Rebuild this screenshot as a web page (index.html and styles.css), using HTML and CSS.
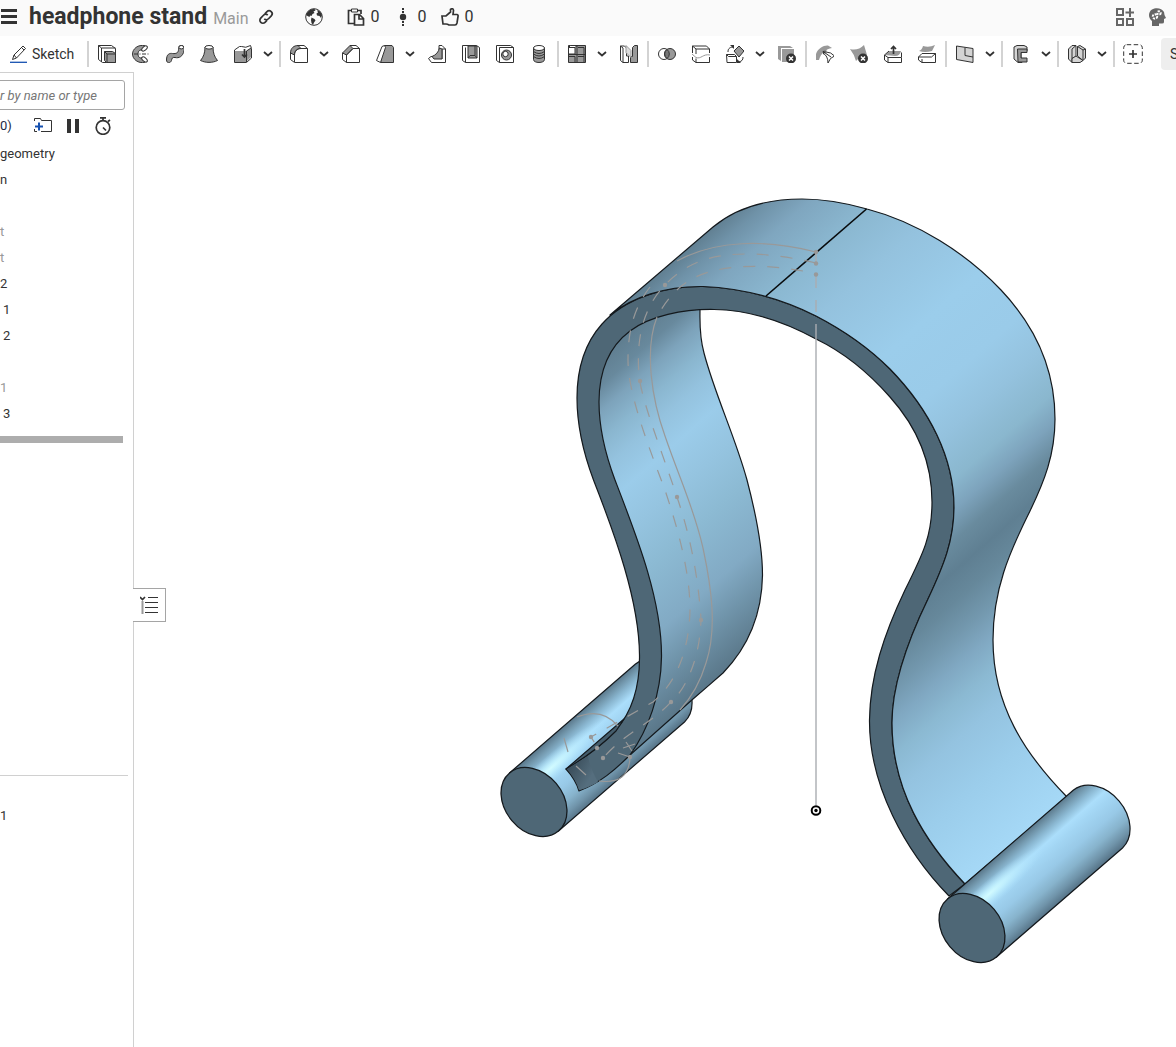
FILE: index.html
```html
<!DOCTYPE html>
<html lang="en">
<head>
<meta charset="utf-8">
<title>headphone stand</title>
<link rel="stylesheet" href="styles.css">
</head>
<body>
<header class="header">
  <button class="plain" aria-label="Menu"><svg class="icon" viewBox="0 0 18 18"><path class="solid" d="M1 1h16v3H1zM1 7h16v3H1zM1 13h16v3H1z"/></svg></button>
  <h1 class="title">headphone stand</h1>
  <span class="workspace">Main</span>
  <button class="plain link" aria-label="Copy link"><svg class="icon" viewBox="0 0 18 18"><g class="thick" transform="rotate(-46 9 9)"><path d="M7.500 12H4.500a3 3 0 010-6h4a3 3 0 013 3"/><path d="M10.500 6h3a3 3 0 010 6h-4a3 3 0 01-3-3"/></g></svg></button>
  <button class="plain globe" aria-label="Public document"><svg class="icon" viewBox="0 0 18 18"><circle class="line" cx="9" cy="9" r="8.300"/><path class="solid" d="M2 5C4 2 6.500.8 9.500 1l1 1.500-2 1 1 1.500-2 1L6.500 8 5 7.500 4.500 9 2.500 8 1 7zM6.500 9.500l3 1.500 1 1.500-1.500 2L8 17 6.500 15 6 12zM12 2l3 1.500 2 3.500-1 3-1.500-2L12 7.500l-.5-2 1.500-1z"/></svg></button>
  <button class="plain stat copies" aria-label="Copies"><svg class="icon" viewBox="0 0 18 18"><path class="thick" d="M4 2.500H1.500v13H7M11 2.500h3V6"/><path class="line" d="M4.500 1h6v3h-6z"/><path class="thick" d="M7.500 6.500h5l4 4V17h-9zM12 7v4h4"/></svg><span>0</span></button>
  <button class="plain stat versions" aria-label="Versions"><svg class="icon" viewBox="0 0 18 18"><circle class="solid" cx="9" cy="9" r="3.200"/><path class="solid" d="M8 0h2v2H8zM8 3h2v2H8zM8 13h2v2H8zM8 16h2v2H8z"/></svg><span>0</span></button>
  <button class="plain stat likes" aria-label="Likes"><svg class="icon" viewBox="0 0 18 18"><path class="thick" d="M1 8h4l4.500-4V1.500Q12-.5 12.500 2.500L12 6.500h4q1.500.5 1 2l-1 6.500q-.5 2-2 2H8q-1.500-1-3-1H2z"/></svg><span>0</span></button>
  <span class="spacer"></span>
  <button class="plain apps" aria-label="App store"><svg class="icon" viewBox="0 0 18 18"><path class="grey-line" d="M1 1h6v6H1zM1 11h6v6H1zM11 11h6v6h-6zM14 0v9M9.500 4.500H18"/></svg></button>
  <button class="plain learn" aria-label="Learning center"><svg class="icon" viewBox="0 0 18 18"><path class="grey-fill" d="M4 18v-5C0 10 0 4 4 1.500 8-1 14 0 16 4l.5 3 1.500 3-2 1v3q0 1.500-2 1.500h-3V18z"/><g fill="none" stroke="#fff" stroke-width="2" stroke-dasharray="2 1"><circle cx="7" cy="8.500" r="2.200"/><circle cx="11" cy="5" r="1.700"/></g></svg></button>
</header>

<nav class="toolbar" aria-label="Feature tools">
  <button class="sketch"><svg class="icon" viewBox="0 0 18 18"><path d="M1 17.300h17" stroke="#1651b0" stroke-width="1.300"/><path class="line" d="M3.500 14.500L5 10 14 1l2.500 2.500-9 9.500zM5 10l2.500 3M12.500 2.500L15 5"/></svg><span>Sketch</span></button>
  <i class="sep"></i>
  <button class="tool" aria-label="Extrude"><svg class="icon" viewBox="0 0 18 18"><path class="line" d="M.5.5h13l4 3v14h-13l-4-3zM3.500 17v-14M.5.5l3 2.500h14"/><path class="fill" d="M6.500 6.500h8l3 2v9h-9l-2-2zM9 17V9h8M6.500 6.500L9 9"/></svg></button>
  <button class="tool" aria-label="Revolve"><svg class="icon" viewBox="0 0 18 18"><path class="fill" d="M13 .8C6-1 .5 4 .5 9S6 19 13 17.200L14 14 11 12.500C8 14 6 12 6 9s2-5 5-3.500L14 3.500z"/><ellipse class="white" cx="12.500" cy="3.500" rx="3.300" ry="1.800" transform="rotate(-40 12.500 3.500)"/><ellipse class="white" cx="12.500" cy="14.500" rx="3.300" ry="1.800" transform="rotate(40 12.500 14.500)"/><path class="line" d="M2 9h16" stroke-dasharray="4 1.500 1 1.500"/></svg></button>
  <button class="tool" aria-label="Sweep"><svg class="icon" viewBox="0 0 18 18"><path class="fill" d="M.5 15c0-6 3-7 6-6.500 4 .5 6-1 6-4 0-2 0-4 3-4s3 3 2.500 5c-1 6-5 8-9 7-3-.5-3 1-3.500 3-1 3-5 3-5-.5z"/><ellipse class="white" cx="15.300" cy="2.200" rx="2.400" ry="1.700"/></svg></button>
  <button class="tool" aria-label="Loft"><svg class="icon" viewBox="0 0 18 18"><path class="fill" d="M5 2c0 6-1.500 10-4.500 13.500 5 2.500 12 2.500 17 0C14.500 12 13 8 13 2z"/><ellipse class="white" cx="9" cy="2.300" rx="4" ry="1.800"/></svg></button>
  <button class="tool" aria-label="Thicken"><svg class="icon" viewBox="0 0 18 18"><path class="line" d="M.5 5l5-3.500h2q4 2 9-1l1 3v9.500l-5 4.500H.5z"/><path class="fill-only" d="M1 6h11l5-3v9l-5 5H1z"/><path class="line" d="M12.500 17V6L17 3"/><path class="thick" d="M10.500 4v8M8 9.500l2.500 2.500L13 9.500"/></svg></button>
  <button class="caret" aria-label="More thicken tools"><svg viewBox="0 0 10 6"><path d="M1 1l4 3.500L9 1"/></svg></button>
  <i class="sep"></i>
  <button class="tool" aria-label="Fillet"><svg class="icon" viewBox="0 0 18 18"><path class="fill" d="M.5 8C.5 3 4 .5 8 .5l3 3C7 3.500 4.500 6 4.500 10z"/><path class="line" d="M8 .5h6l3.500 3v14h-13l-4-3V8M4.500 17V10c0-4 2.500-6.500 6.500-6.500h6.500"/></svg></button>
  <button class="caret" aria-label="More fillet tools"><svg viewBox="0 0 10 6"><path d="M1 1l4 3.500L9 1"/></svg></button>
  <button class="tool" aria-label="Chamfer"><svg class="icon" viewBox="0 0 18 18"><path class="fill" d="M.5 8L8 .5l3 3L4.500 10z"/><path class="line" d="M8 .5h6l3.500 3v14h-13l-4-3V8M4.500 17.500V10L11 3.500h6.500"/></svg></button>
  <button class="tool" aria-label="Draft"><svg class="icon" viewBox="0 0 18 18"><path class="fill" d="M8.500.5H16l1.500 2v15h-13z"/><path class="white" d="M.5 15.500L6 1.500 8.500.5l1 2-5 15z"/></svg></button>
  <button class="caret" aria-label="More draft tools"><svg viewBox="0 0 10 6"><path d="M1 1l4 3.500L9 1"/></svg></button>
  <button class="tool" aria-label="Rib"><svg class="icon" viewBox="0 0 18 18"><path class="line" d="M.5 13.500l3 4h14V4L14 .5h-3V5M.5 13.500l2.500-2h2M14 4h3.500M14 4v10"/><path class="fill" d="M4 11.500C8 10 10.500 7 11.500 3l2.500 1v10H6z"/></svg></button>
  <button class="tool" aria-label="Shell"><svg class="icon" viewBox="0 0 18 18"><path class="line" d="M.5.500h14l3 2v15h-14l-3-2zM3.500 17.500v-15"/><path class="fill" d="M6 1h9v12H6z"/><path class="line" d="M6 13l2-2.500h5V1M15 13l-2-2.500"/></svg></button>
  <button class="tool" aria-label="Hole"><svg class="icon" viewBox="0 0 18 18"><path class="line" d="M.5.500h14l3 2v15h-14l-3-2zM3.500 17.500v-15h14"/><circle class="fill" cx="10.500" cy="10" r="5"/><circle class="white" cx="9.500" cy="9" r="2.700"/></svg></button>
  <button class="tool" aria-label="Thread"><svg class="icon" viewBox="0 0 18 18"><path class="fill" d="M3.500 3v11.500c0 4 11 4 11 0V3z"/><path class="line" d="M3.500 6.500q5.500 4 11 0M3.500 9q5.500 4 11 0M3.500 11.500q5.500 4 11 0"/><ellipse class="white" cx="9" cy="3" rx="5.500" ry="2.500"/></svg></button>
  <i class="sep"></i>
  <button class="tool" aria-label="Pattern"><svg class="icon" viewBox="0 0 18 18"><path class="fill" d="M.5.500h17v17H.5z"/><path class="white" d="M.5 2.500h6.500V9H.5zM.5 2.500l2-2h6.500L7 2.500"/><path class="line" d="M9 .5v17M.5 9.500h17M7 11.500v6M7 11.500H.5M10 2.500h6M16 2.500v15M10 11.500h6"/></svg></button>
  <button class="caret" aria-label="More pattern tools"><svg viewBox="0 0 10 6"><path d="M1 1l4 3.500L9 1"/></svg></button>
  <button class="tool" aria-label="Mirror"><svg class="icon" viewBox="0 0 18 18"><path class="line" d="M.5 1h4l2 2v8h2v6.500H3l-2.500-2zM3 17.500V3L.5 1"/><path class="fill" d="M17.500 17.500H10.500v-6h2v-9l2-2h3z"/><path d="M6 .5l5 5v7l-5-5z" fill="#ddd" stroke="#999"/></svg></button>
  <i class="sep"></i>
  <button class="tool" aria-label="Boolean"><svg class="icon" viewBox="0 0 18 18"><circle class="line" cx="6" cy="9" r="5.500"/><circle class="fill" cx="12" cy="9" r="5.500"/><path d="M9 4.500a5.500 5.500 0 010 9 5.500 5.500 0 010-9z" fill="#777" stroke="#333"/></svg></button>
  <button class="tool" aria-label="Split"><svg class="icon" viewBox="0 0 18 18"><path class="line" d="M.5 8V1h14l3 3v4M.5 1l3.500 3h13.500M4 4v5M.5 12v3L4 17.500h13.500V12M4 13.500v4"/><path class="grey-thin" d="M0 9l4 3.500c5 2 7-4 14-2.500"/></svg></button>
  <button class="tool" aria-label="Transform"><svg class="icon" viewBox="0 0 18 18"><path class="line" d="M.5 9.500h8l2 2v6H1zM.5 9.500l2 2h8"/><path class="fill" d="M13 1l5 5-5 6-5-6z"/><path class="line" d="M2 7C2 4 3 2.500 7 2M17 12c0 3-1 4-4 5"/><path class="solid" d="M4 0h4v4zM11 14v4h4z"/></svg></button>
  <button class="caret" aria-label="More transform tools"><svg viewBox="0 0 10 6"><path d="M1 1l4 3.500L9 1"/></svg></button>
  <button class="tool" aria-label="Delete part"><svg class="icon" viewBox="0 0 18 18"><path class="fill-only" d="M0 1h12l3 2H3v13l-3-2zM4 4h12v13H4z"/><circle class="solid" cx="13" cy="13.500" r="5"/><path d="M11 11.500l4 4M15 11.500l-4 4" stroke="#fff" stroke-width="1.500"/></svg></button>
  <i class="sep"></i>
  <button class="tool" aria-label="Modify fillet"><svg class="icon" viewBox="0 0 18 18"><path class="fill-only" d="M0 15V9C2 3 8 0 12 .5L16 3c-6 1-11 5-13 12z"/><path class="white" d="M7 8q5 3 5 10l2.500-4.500 4-2.500Q15 7 10 7z"/><path class="line" d="M15 12L7 6.500M7 6.500l3.500-.5M7 6.500l1 3"/></svg></button>
  <button class="tool" aria-label="Delete face"><svg class="icon" viewBox="0 0 18 18"><path class="fill-only" d="M0 4q8 2 14-4l3 10q-8 2-11 6Q4 9 0 4z"/><circle class="solid" cx="13" cy="13.500" r="5"/><path d="M11 11.500l4 4M15 11.500l-4 4" stroke="#fff" stroke-width="1.500"/></svg></button>
  <button class="tool" aria-label="Move face"><svg class="icon" viewBox="0 0 18 18"><path class="fill-only" d="M1 10L5 6h12q-1 5-6 5z"/><path class="line" d="M.5 10L4 12.500h13.500v5H4L.5 15zM.5 10L5 6M4 12.500v5M17.500 12V7.500"/><path class="thick" d="M9.500 9V2M7 4l2.500-2.500L12 4"/></svg></button>
  <button class="tool" aria-label="Replace face"><svg class="icon" viewBox="0 0 18 18"><path class="fill-only" d="M1 6q3-1 4-5 6 2 12-1l-3 6q-7 2-13 0z"/><path class="line" d="M.5 12L4 8.500h13.500v9H4L.5 15zM.5 12h13l4-3.500M4 17.500V14"/></svg></button>
  <i class="sep"></i>
  <button class="tool" aria-label="Plane"><svg class="icon" viewBox="0 0 18 18"><path class="pale" d="M.5 1l16.500 2.500v14L.5 14.500z"/><path class="line" d="M9 2.500v8L17 12"/></svg></button>
  <button class="caret" aria-label="More construction tools"><svg viewBox="0 0 10 6"><path d="M1 1l4 3.500L9 1"/></svg></button>
  <i class="sep"></i>
  <button class="tool" aria-label="Frame"><svg class="icon" viewBox="0 0 18 18"><path class="pale" d="M2 2l3-1.500h7L15 2v4H9v6l1 5.500H6L2 14z"/><path class="fill" d="M5.500 4H15v3.500H9V13h6v4H6z"/></svg></button>
  <button class="caret" aria-label="More frame tools"><svg viewBox="0 0 10 6"><path d="M1 1l4 3.500L9 1"/></svg></button>
  <i class="sep"></i>
  <button class="tool" aria-label="Sheet metal"><svg class="icon" viewBox="0 0 18 18"><path class="pale" d="M.5 4L4 .5h4v11l-4 2v4L.500 14z"/><path class="pale" d="M4 13.500l4-2.500 7 4.500-3 2H4z"/><path class="pale" d="M9.500 1.500L12 .5l5.500 3.500v9L15 15.500 9.500 11z"/><path class="line" d="M9.500 1.500L15 5v10.500M15 5l2.500-1M4 13.500V4L8 .5"/></svg></button>
  <button class="caret" aria-label="More sheet metal tools"><svg viewBox="0 0 10 6"><path d="M1 1l4 3.500L9 1"/></svg></button>
  <i class="sep"></i>
  <button class="tool" aria-label="Add custom features"><svg class="icon wide" viewBox="0 0 20 20"><rect class="line" x=".7" y=".7" width="18.600" height="18.600" rx="3" stroke-dasharray="4.500 2.500"/><path class="thick" d="M10 6v8M6 10h8"/></svg></button>
  <input class="search" type="text" aria-label="Search tools" placeholder="Search tools">
</nav>

<div class="workarea">
  <aside class="features">
    <input class="filter" type="text" aria-label="Filter" placeholder="r by name or type">
    <div class="feature-head">
      <span class="count">0)</span>
      <button class="plain" aria-label="Add folder"><svg class="icon" viewBox="0 0 18 18"><path class="line" d="M.5 4V1.500h6l1 2h10v11H7M.5 12v2.500H3"/><path d="M5 5.500v8M1 9.500h8" stroke="#1651b0" stroke-width="2"/></svg></button>
      <button class="plain" aria-label="Pause"><svg class="icon" viewBox="0 0 18 18"><path class="solid" d="M3 2h4v14H3zM11 2h4v14h-4z"/></svg></button>
      <button class="plain" aria-label="Timing"><svg class="icon" viewBox="0 0 18 18"><circle class="thick" cx="9" cy="10.500" r="6.800"/><path class="thick" d="M6 .800h6M9 1v3M9 10.500l3 3M14 4.500l2-1.500"/></svg></button>
    </div>
    <ul class="tree">
      <li>geometry</li>
      <li>n</li>
      <li></li>
      <li class="off">t</li>
      <li class="off">t</li>
      <li>2</li>
      <li class="in">1</li>
      <li class="in">2</li>
      <li></li>
      <li class="off">1</li>
      <li class="in">3</li>
    </ul>
    <div class="rollback"></div>
    <div class="parts"><span>1</span></div>
  </aside>

  <main class="viewport">
    <button class="toggle" aria-label="Hide feature list"><svg class="icon" viewBox="0 0 18 18"><path class="thick" d="M0 1l2.500 2.500L5 1"/><path d="M2.500 5v13" stroke="#999" stroke-width="2"/><path class="line" d="M8 1.500h10M5 6.500h13M5 11.500h13M5 16.500h13"/></svg></button>
    <svg class="model" viewBox="134 72 1042 975" preserveAspectRatio="xMinYMin meet" role="img" aria-label="Headphone stand model">
      <defs>
        <linearGradient id="outer" gradientUnits="userSpaceOnUse" x1="418" y1="481" x2="853" y2="980">
          <stop offset="0" stop-color="#5f7d8f"/><stop offset=".03" stop-color="#6f92a8"/><stop offset=".07" stop-color="#7fa6bf"/><stop offset=".14" stop-color="#8bb8d1"/><stop offset=".21" stop-color="#94c2de"/><stop offset=".32" stop-color="#9bcdeb"/><stop offset=".41" stop-color="#9acbe9"/><stop offset=".47" stop-color="#94c2de"/><stop offset=".53" stop-color="#8ab7ce"/><stop offset=".565" stop-color="#7da3bc"/><stop offset=".6" stop-color="#698b9e"/><stop offset=".635" stop-color="#5f7f92"/><stop offset=".67" stop-color="#66889b"/><stop offset=".71" stop-color="#7398ae"/><stop offset=".745" stop-color="#80a8c2"/><stop offset=".785" stop-color="#8bb9d2"/><stop offset=".83" stop-color="#94c3e0"/><stop offset=".9" stop-color="#9bcdeb"/><stop offset="1" stop-color="#a5d8f6"/>
        </linearGradient>
        <linearGradient id="inner" gradientUnits="userSpaceOnUse" x1="435" y1="501" x2="645" y2="741">
          <stop offset="0" stop-color="#5f7d8f"/><stop offset=".07" stop-color="#68899d"/><stop offset=".13" stop-color="#7da3bb"/><stop offset=".2" stop-color="#8ab6cf"/><stop offset=".27" stop-color="#94c2de"/><stop offset=".36" stop-color="#9bccea"/><stop offset=".47" stop-color="#95c4e0"/><stop offset=".6" stop-color="#8cbad3"/><stop offset=".77" stop-color="#82aac4"/><stop offset=".87" stop-color="#7094aa"/><stop offset="1" stop-color="#5a7789"/>
        </linearGradient>
        <linearGradient id="tube" gradientUnits="userSpaceOnUse" x1="-25" y1="-28.500" x2="25" y2="28.500">
          <stop offset="0" stop-color="#587588"/><stop offset=".08" stop-color="#7094a9"/><stop offset=".18" stop-color="#8ab7d1"/><stop offset=".3" stop-color="#abdefb"/><stop offset=".4" stop-color="#a3d6f4"/><stop offset=".6" stop-color="#98c9e7"/><stop offset=".77" stop-color="#87b3cc"/><stop offset=".9" stop-color="#7094aa"/><stop offset="1" stop-color="#58768a"/>
        </linearGradient>
        <radialGradient id="shine" gradientUnits="userSpaceOnUse" cx="0" cy="0" r="1" gradientTransform="translate(17 -34) rotate(-41) scale(72 12)">
          <stop offset="0" stop-color="#d2fbff"/><stop offset=".3" stop-color="#c6f4ff" stop-opacity=".8"/><stop offset="1" stop-color="#b0e4ff" stop-opacity="0"/>
        </radialGradient>
        <linearGradient id="slot" gradientUnits="userSpaceOnUse" x1="566" y1="769" x2="588" y2="782">
          <stop offset="0" stop-color="#384b58"/><stop offset="1" stop-color="#556e7e"/>
        </linearGradient>
        <g id="roller">
          <path fill="url(#tube)" stroke="#14191d" d="M-24.500 -29L101.500 -138A38 29 50 01150.500 -80L24.500 29z"/>
          <path fill="url(#shine)" d="M-24.500 -29L101.500 -138A38 29 50 01150.500 -80L24.500 29z"/>
          <ellipse rx="38" ry="28.900" transform="rotate(50)" fill="#4e6776" stroke="#14191d" stroke-width="1.300"/>
        </g>
      </defs>
      <g stroke-linejoin="round" stroke-width="1.200">
        <use href="#roller" transform="translate(534 802)"/>
        <path fill="url(#inner)" stroke="#14191d" d="M700 309C700 322 699 335 704 353C715 395 735 436 747 480C757 518 762.500 550 762.500 575C762 610 750 645 723 673C715 680 700 693 693 699L630 755L640 720L650 600L603 480L590 400L608 328L680 300z"/>
        <path fill="#4e6776" stroke="#14191d" d="M566 769C590 754 607 740 616 730C630 714 640 690 639.500 655C639 600 615 535 593.500 480C583 452 577 425 577 398C577 368 585 343 602 324C625 298 665 286 703 286.500C740 288 778 297 816 316C845 331 868 347 890 369C930 410 954 458 954 507C954 540 944 565 928 599C912 632 892 680 892 723C892 790 925 842 965 884L949 896C905 851 869 785 869.500 720C870 676 884 634 905 590C924 552 932 535 932 502C932 462 916 426 890 397C868 372 845 353 816 339C785 322 750 310 714 309.500C683 309 650 316 630 331C610 346 599 370 599 402C599 430 606 456 615 480C637 537 662 600 661.500 657C661 695 648 730 630 755C615 770 600 783 579 791Q576 780 566 769z"/>
        <path fill="#455d6c" stroke="#14191d" d="M624 719L566 769C590 755 606 741 616 731z"/>
        <path fill="url(#slot)" d="M567 769L588 756Q590 768 598 782Q590 787 579 790Q576 780 567 769z"/>
        <path fill="url(#outer)" stroke="#14191d" d="M610 315L713 227C738 206 770 199 802 199C825 199 846 203 867 209C917 222 966 253 1001 290C1035 326 1055 370 1055 419C1055 455 1044 482 1030 511C1009 553 993 590 993 640C993 706 1025 754 1067 797L965 884C925 842 892 790 892 723C892 680 912 632 928 599C944 565 954 540 954 507C954 458 930 410 890 369C868 347 845 331 816 316C778 297 740 288 703 286.500C665 286 632 297 610 315z"/>
        <path stroke="#080b0d" stroke-width="1.600" d="M766 296L866.500 209"/>
        <use href="#roller" transform="translate(972 928)"/>
      </g>
      <g class="construction">
        <path d="M816 252C765 239 715 240 677 261"/>
        <path d="M657 317C644 350 652 400 665 436C680 480 694 508 703 548C712 590 717 630 706 663Q698 690 680 710"/>
        <path class="dash" d="M816 263C760 250 712 250 683 270C650 292 635 325 639 375C641 400 665 460 677 497C690 535 698 575 701 619C700 660 685 690 671 702C650 725 628 730 603 758"/>
        <path class="dash" d="M803 271C760 263 715 265 690 280Q670 292 657 317"/>
        <path class="dash" d="M650 287C632 310 628 335 628 360C628 395 650 450 665 490C680 535 690 575 690 610C689 650 677 682 653 702L591 737L598 748"/>
        <path d="M577 717Q602 707 618 726M564 738L568 752M576 766L586 775M630 757Q629 785 599 781M623 748L635 744M626 742L632 751M618 753L630 757"/>
        <path class="dash axis" d="M816 252V330"/>
        <path class="axis" d="M816 330V805"/>
        <g class="dots"><circle cx="816" cy="252" r="2.200"/><circle cx="816" cy="263.500" r="2.200"/><circle cx="816" cy="274.500" r="2.200"/><circle cx="665" cy="285" r="2.200"/><circle cx="640" cy="381" r="2.200"/><circle cx="677" cy="497" r="2.200"/><circle cx="701" cy="620" r="2.200"/><circle cx="671" cy="702" r="2.200"/><circle cx="591" cy="737" r="2.200"/><circle cx="597" cy="748" r="2.200"/><circle cx="603" cy="758" r="2.200"/><circle cx="630" cy="757" r="2.200"/></g>
      </g>
      <circle cx="816" cy="810.500" r="4.300" fill="#fff" stroke="#000" stroke-width="2"/><circle cx="816" cy="810.500" r="1.700"/>
    </svg>
  </main>
</div>
</body>
</html>
```
FILE: styles.css
```css
* { box-sizing: border-box; }
body {
  margin: 0;
  height: 100vh;
  display: flex;
  flex-direction: column;
  overflow: hidden;
  background: #fff;
  color: #333;
  font: 13px/16px Roboto, "Liberation Sans", sans-serif;
}
button, input { font: inherit; color: inherit; }
button { border: 0; padding: 0; background: none; cursor: pointer; }
svg { display: block; flex: none; }

.icon { width: 18px; height: 18px; }
.icon.wide { width: 20px; height: 20px; }
.line, .thick { fill: none; stroke: #333; }
.thick { stroke-width: 1.7px; }
.solid { fill: #333; }
.fill { fill: #999; stroke: #333; }
.fill-only { fill: #999; }
.white { fill: #fff; stroke: #333; }
.pale { fill: #d4d4d4; stroke: #333; }
.grey-line { fill: none; stroke: #666; stroke-width: 2px; }
.grey-thin { fill: none; stroke: #999; }
.grey-fill { fill: #666; }

.header {
  display: flex;
  align-items: center;
  height: 36px;
  flex: none;
  padding: 0 10px 2px 0;
  background: #fafafa;
}
.plain { display: flex; align-items: center; }
.title { margin: 0 6px 0 11px; font-size: 23px; line-height: 32px; font-weight: 700; }
.workspace { color: #999; font-size: 16px; line-height: 20px; padding-top: 4px; }
.link { margin-left: 8px; }
.globe { margin-left: 30px; }
.stat { gap: 6px; font-size: 16px; line-height: 20px; }
.copies { margin-left: 24px; }
.versions { margin-left: 14px; }
.likes { margin-left: 14px; }
.spacer { flex: 1; }
.apps { margin-right: 14px; }

.toolbar {
  display: flex;
  align-items: center;
  height: 36px;
  flex: none;
  overflow: hidden;
}
.sketch {
  display: flex;
  flex: none;
  align-items: center;
  gap: 5px;
  width: 86px;
  padding-left: 9px;
  font-size: 14px;
}
.sep { flex: none; width: 2px; height: 26px; margin: 0 1px; background: #d3d3d3; }
.tool { flex: none; display: flex; align-items: center; justify-content: center; width: 34px; height: 32px; }
.caret { flex: none; width: 18px; padding-left: 3px; height: 32px; }
.caret svg { width: 10px; height: 6px; fill: none; stroke: #333; stroke-width: 1.8px; }
.search {
  flex: none;
  width: 160px;
  height: 32px;
  margin-left: 11px;
  padding: 0 9px;
  border: 0;
  border-radius: 4px;
  background: #eee;
  font-size: 14px;
}
.search::placeholder { color: #333; opacity: 1; }

.workarea { flex: 1; min-height: 0; display: flex; }
.features {
  flex: none;
  width: 134px;
  padding-top: 7px;
  border-top: 1px solid #d0d0d0;
  border-right: 1px solid #d0d0d0;
  overflow: hidden;
}
.filter {
  display: block;
  width: 129px;
  height: 30px;
  margin-left: -4px;
  padding: 0 0 0 3px;
  border: 1px solid #a5a5a5;
  border-radius: 3px;
  font-style: italic;
}
.filter::placeholder { color: #777; opacity: 1; }
.feature-head { display: flex; align-items: center; gap: 12px; height: 30px; margin-top: 1px; }
.count { width: 22px; color: #1d2b45; }
.tree { list-style: none; margin: 0; padding: 0; }
.tree li { height: 26px; line-height: 26px; }
.tree .off { color: #999; }
.tree .in { padding-left: 3px; }
.rollback { width: 123px; height: 7px; margin-top: 9px; background: #adadad; }
.parts {
  width: 128px;
  margin-top: 332px;
  padding-top: 32px;
  border-top: 1px solid #d0d0d0;
}
.viewport { flex: 1; min-width: 0; position: relative; }
.model { width: 100%; height: 100%; }
.toggle {
  position: absolute;
  left: -1px;
  top: 516px;
  width: 33px;
  height: 34px;
  padding-left: 7px;
  border: 1px solid #a5a5a5;
  border-left: 0;
  background: #fff;
}
.construction { fill: none; stroke: #999; stroke-width: 1.2px; }
.dash { stroke-dasharray: 12 12; }
.axis { stroke-width: 2px; stroke: #a9adb0; stroke-opacity: .7; }
.dots { fill: #999; stroke: none; }
```
